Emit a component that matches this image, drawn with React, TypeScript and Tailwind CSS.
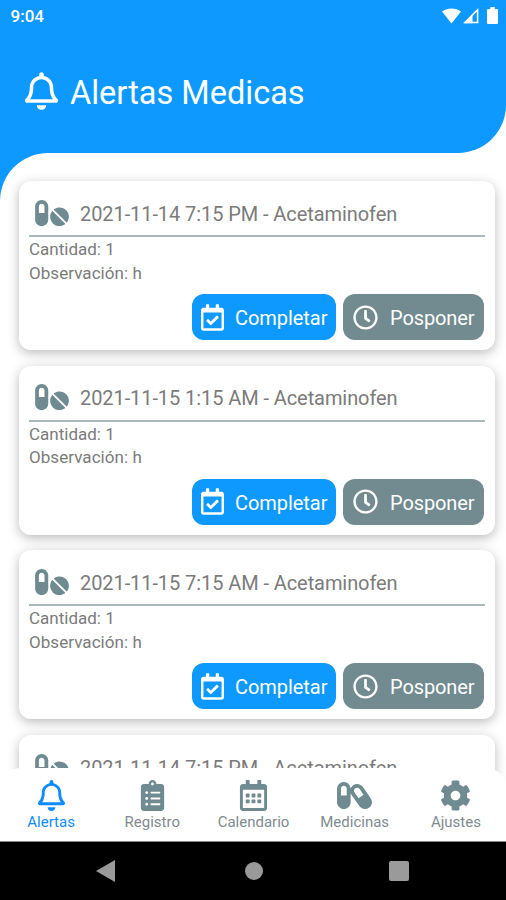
import {
  FaRegBell,
  FaPills,
  FaRegCalendarCheck,
  FaRegClock,
  FaClipboardList,
  FaRegCalendarAlt,
  FaCapsules,
  FaCog,
} from 'react-icons/fa';

const alerts = [
  { date: '2021-11-14 7:15 PM', medicine: 'Acetaminofen', quantity: 1, note: 'h' },
  { date: '2021-11-15 1:15 AM', medicine: 'Acetaminofen', quantity: 1, note: 'h' },
  { date: '2021-11-15 7:15 AM', medicine: 'Acetaminofen', quantity: 1, note: 'h' },
  { date: '2021-11-14 7:15 PM', medicine: 'Acetaminofen' },
];

const tabs = [
  { label: 'Alertas', Icon: FaRegBell, active: true },
  { label: 'Registro', Icon: FaClipboardList },
  { label: 'Calendario', Icon: FaRegCalendarAlt },
  { label: 'Medicinas', Icon: FaCapsules },
  { label: 'Ajustes', Icon: FaCog },
];

type Alert = { date: string; medicine: string; quantity?: number; note?: string };

function StatusBar() {
  return (
    <div className="h-8 flex items-center justify-between pl-[10.5px] pr-[8px] text-white">
      <span className="text-[17px] leading-8 font-medium">9:04</span>
      <div className="flex items-center -mt-px">
        <svg className="w-[19px] h-4" viewBox="0 0 19 16" fill="currentColor">
          <path d="M0 3.6C5.5-.6 13.5-.6 19 3.6L9.5 15.5z" />
        </svg>
        <svg className="w-4 h-4 ml-[2px]" viewBox="0 0 16 16">
          <path d="M1.8 14.6H14.6V1.8z" fill="none" stroke="currentColor" strokeWidth="1.5" />
          <path d="M1 15.3H9.5V6.5z" fill="currentColor" />
        </svg>
        <svg className="w-[11px] h-[17px] ml-2" viewBox="0 0 11 17" fill="currentColor">
          <path d="M3.3 0h4.4v2H10q1 0 1 1v13q0 1-1 1H1q-1 0-1-1V3q0-1 1-1h2.3z" />
        </svg>
      </div>
    </div>
  );
}

function AlertCard({ date, medicine, quantity, note }: Alert) {
  return (
    <div className="h-[169px] shrink-0 rounded-[12px] bg-white px-[10px] pb-[10px] flex flex-col shadow-[0_3px_12px_rgba(0,0,0,0.27)]">
      <div className="h-[56px] shrink-0 border-b-2 border-[#a9b9bb] flex items-center pl-[6px] pt-[11px]">
        <FaPills className="w-[34px] h-[30px] mb-[2px] text-[#6f8a90]" />
        <span className="ml-[11px] text-[20px] tracking-[-0.08px] whitespace-nowrap text-[#7b7b7b]">
          {date} - {medicine}
        </span>
      </div>
      {note && (
        <>
          <div className="pt-px text-[17px] leading-[23.5px] text-[#7b7b7b]">
            <p>Cantidad: {quantity}</p>
            <p className="tracking-[0.05px]">Observación: {note}</p>
          </div>
          <div className="mt-auto flex justify-end gap-[7px] pr-px text-white text-[20px]">
            <button className="w-[144px] h-[46px] rounded-[12px] bg-[#0d99ff] flex items-center pl-[9px]">
              <FaRegCalendarCheck className="w-[23px] h-[27px]" />
              <span className="ml-[11px] pt-[2px] tracking-[-0.05px]">Completar</span>
            </button>
            <button className="w-[141px] h-[46px] rounded-[12px] bg-[#728b90] flex items-center pl-[10px]">
              <FaRegClock className="w-[25px] h-[25px]" />
              <span className="ml-[12px] pt-[2px] tracking-[-0.1px]">Posponer</span>
            </button>
          </div>
        </>
      )}
    </div>
  );
}

export default function App() {
  return (
    <div className="w-[506px] h-[900px] bg-white overflow-hidden flex flex-col font-[Roboto,sans-serif]">
      {/* Header */}
      <div className="bg-white shrink-0">
        <header className="h-[153px] bg-[#0d99ff] rounded-br-[48px] text-white">
          <StatusBar />
          <div className="flex items-center pl-[25px] pt-[38px]">
            <FaRegBell className="w-[33px] h-[38px] mb-[3px]" />
            <h1 className="ml-[12px] pt-px text-[32.5px] leading-[44px]">Alertas Medicas</h1>
          </div>
        </header>
      </div>

      {/* Alert list, runs under the rounded corners of the tab bar */}
      <main className="h-[635px] shrink-0 overflow-hidden bg-[linear-gradient(to_right,#0d99ff_50px,white_50px)] bg-[length:100%_48px] bg-no-repeat">
        <div className="h-full bg-white rounded-tl-[48px] pt-[28px] pl-[19px] pr-[11px]">
          <div className="h-full flex flex-col gap-[15.7px]">
            {alerts.map((alert, index) => (
              <AlertCard key={index} {...alert} />
            ))}
          </div>
        </div>
      </main>

      {/* Bottom tabs */}
      <nav className="relative -mt-[20px] h-[74px] shrink-0 bg-white rounded-t-[20px] grid grid-cols-5 border-b border-[#888]">
        {tabs.map(({ label, Icon, active }) => (
          <div
            key={label}
            className={`flex flex-col items-center pt-[11.5px] pl-px ${active ? 'text-[#0d8cff]' : 'text-[#6f8a90]'}`}
          >
            <Icon className="w-[35px] h-[31px]" />
            <span className={`mt-[1.5px] text-[15px] leading-[20px] ${active ? '' : 'text-[#7f8b8e]'}`}>{label}</span>
          </div>
        ))}
      </nav>

      {/* System navigation */}
      <div className="h-[58px] shrink-0 bg-black flex items-center text-[#9a9a9a]">
        <svg className="ml-[96px] w-[19px] h-[22px]" viewBox="0 0 19 22" fill="currentColor">
          <path d="M19 0v22L0 11z" />
        </svg>
        <span className="ml-[130px] w-[18px] h-[18px] rounded-full bg-[#9a9a9a]" />
        <span className="ml-[126px] w-[20px] h-[20px] rounded-[2px] bg-[#9a9a9a]" />
      </div>
    </div>
  );
}
